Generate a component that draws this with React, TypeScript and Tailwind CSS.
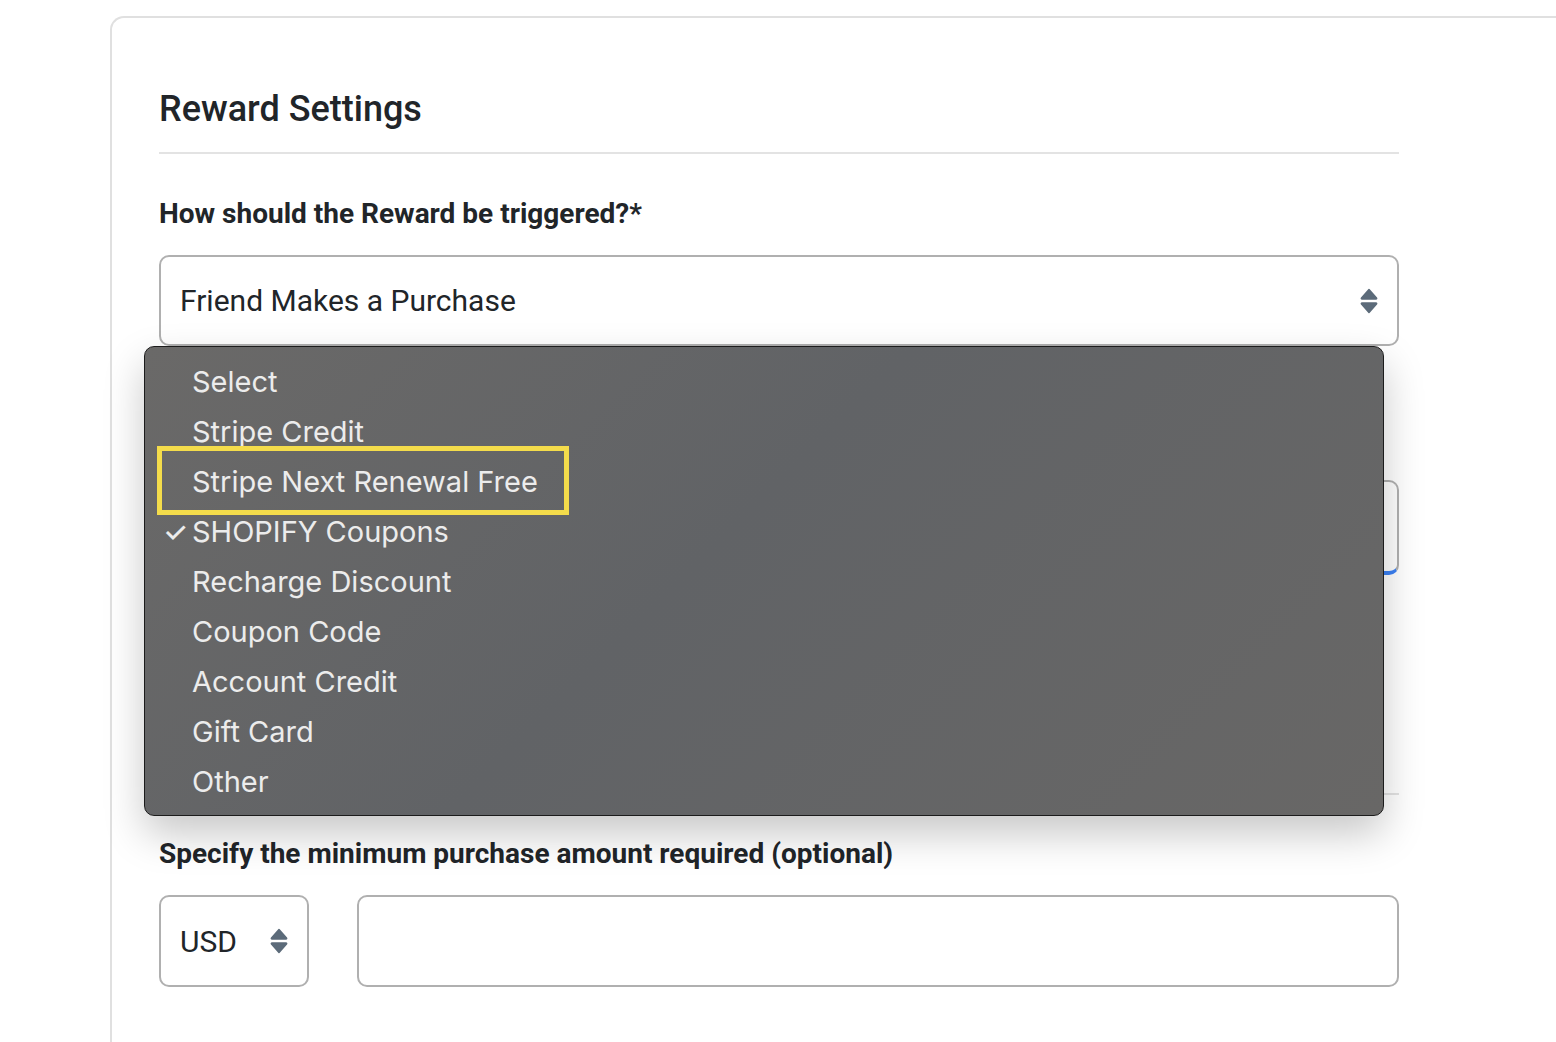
import React from 'react';

const options = [
  'Select',
  'Stripe Credit',
  'Stripe Next Renewal Free',
  'SHOPIFY Coupons',
  'Recharge Discount',
  'Coupon Code',
  'Account Credit',
  'Gift Card',
  'Other',
];

function SelectArrows() {
  return (
    <svg width="18" height="26" viewBox="0 0 18 26" aria-hidden="true">
      <path d="M9 1.5 L16.5 10 Q17 11 16 11 H2 Q1 11 1.5 10 Z" fill="#5c6b7a" strokeLinejoin="round" stroke="#5c6b7a" strokeWidth="1.5" />
      <path d="M9 24.5 L16.5 16 Q17 15 16 15 H2 Q1 15 1.5 16 Z" fill="#5c6b7a" strokeLinejoin="round" stroke="#5c6b7a" strokeWidth="1.5" />
    </svg>
  );
}

export default function App() {
  return (
    <div className="min-h-[1042px] bg-white pl-[110px] pt-[16px] overflow-hidden font-['Roboto',sans-serif] text-[#212529]">
      <div className="w-[1500px] min-h-[1030px] border-l-2 border-t-2 border-[#e0e0e0] rounded-tl-[14px] pl-[47px] pt-[68px]">
        <div className="w-[1240px]">
          <h2 className="text-[36px] leading-[46px] font-medium">Reward Settings</h2>
          <div className="mt-[20px] h-[2px] bg-[#e3e3e3]" />

          <label className="block mt-[42px] text-[28px] leading-[36px] font-bold">
            How should the Reward be triggered?*
          </label>

          <div className="relative mt-[23px]">
            <div className="h-[91px] border-2 border-[#b0b0b0] rounded-[10px] flex items-center justify-between pl-[19px] pr-[19px]">
              <span className="text-[30px]">Friend Makes a Purchase</span>
              <SelectArrows />
            </div>

            {/* reward type select, hidden behind the open menu */}
            <div className="mt-[134px] h-[95px] border-2 border-[#b0b0b0] border-b-[4px] border-b-[#3b82f6] rounded-[10px]" />
            <div className="mt-[218px] h-[2px] bg-[#e3e3e3]" />

            {/* open native menu */}
            <div className="absolute left-[-15px] top-[91px] w-[1240px] h-[470px] rounded-[10px] border border-[#1c1c1c] bg-[linear-gradient(135deg,#6a6968_0%,#616366_45%,#686766_100%)] shadow-[0_18px_40px_rgba(0,0,0,0.22)] py-[10px] font-['Inter',sans-serif]">
              {options.map((o) => (
                <div key={o} className="relative h-[50px] flex items-center pl-[47px] text-[29px] text-[#ececec]">
                  {o === 'SHOPIFY Coupons' && (
                    <span className="absolute left-[18px] text-[28px] font-medium">✓</span>
                  )}
                  {o}
                </div>
              ))}
              <div className="absolute left-[12px] top-[99px] w-[412px] h-[69px] border-[5px] border-[#f4dc4b]" />
            </div>
          </div>

          <label className="block mt-[41px] text-[28px] leading-[36px] font-bold">
            Specify the minimum purchase amount required (optional)
          </label>

          <div className="mt-[23px] flex gap-[48px]">
            <div className="w-[150px] h-[92px] border-2 border-[#b0b0b0] rounded-[10px] flex items-center justify-between pl-[19px] pr-[19px]">
              <span className="text-[30px]">USD</span>
              <SelectArrows />
            </div>
            <div className="w-[1044px] h-[92px] border-2 border-[#b0b0b0] rounded-[10px]" />
          </div>
        </div>
      </div>
    </div>
  );
}
